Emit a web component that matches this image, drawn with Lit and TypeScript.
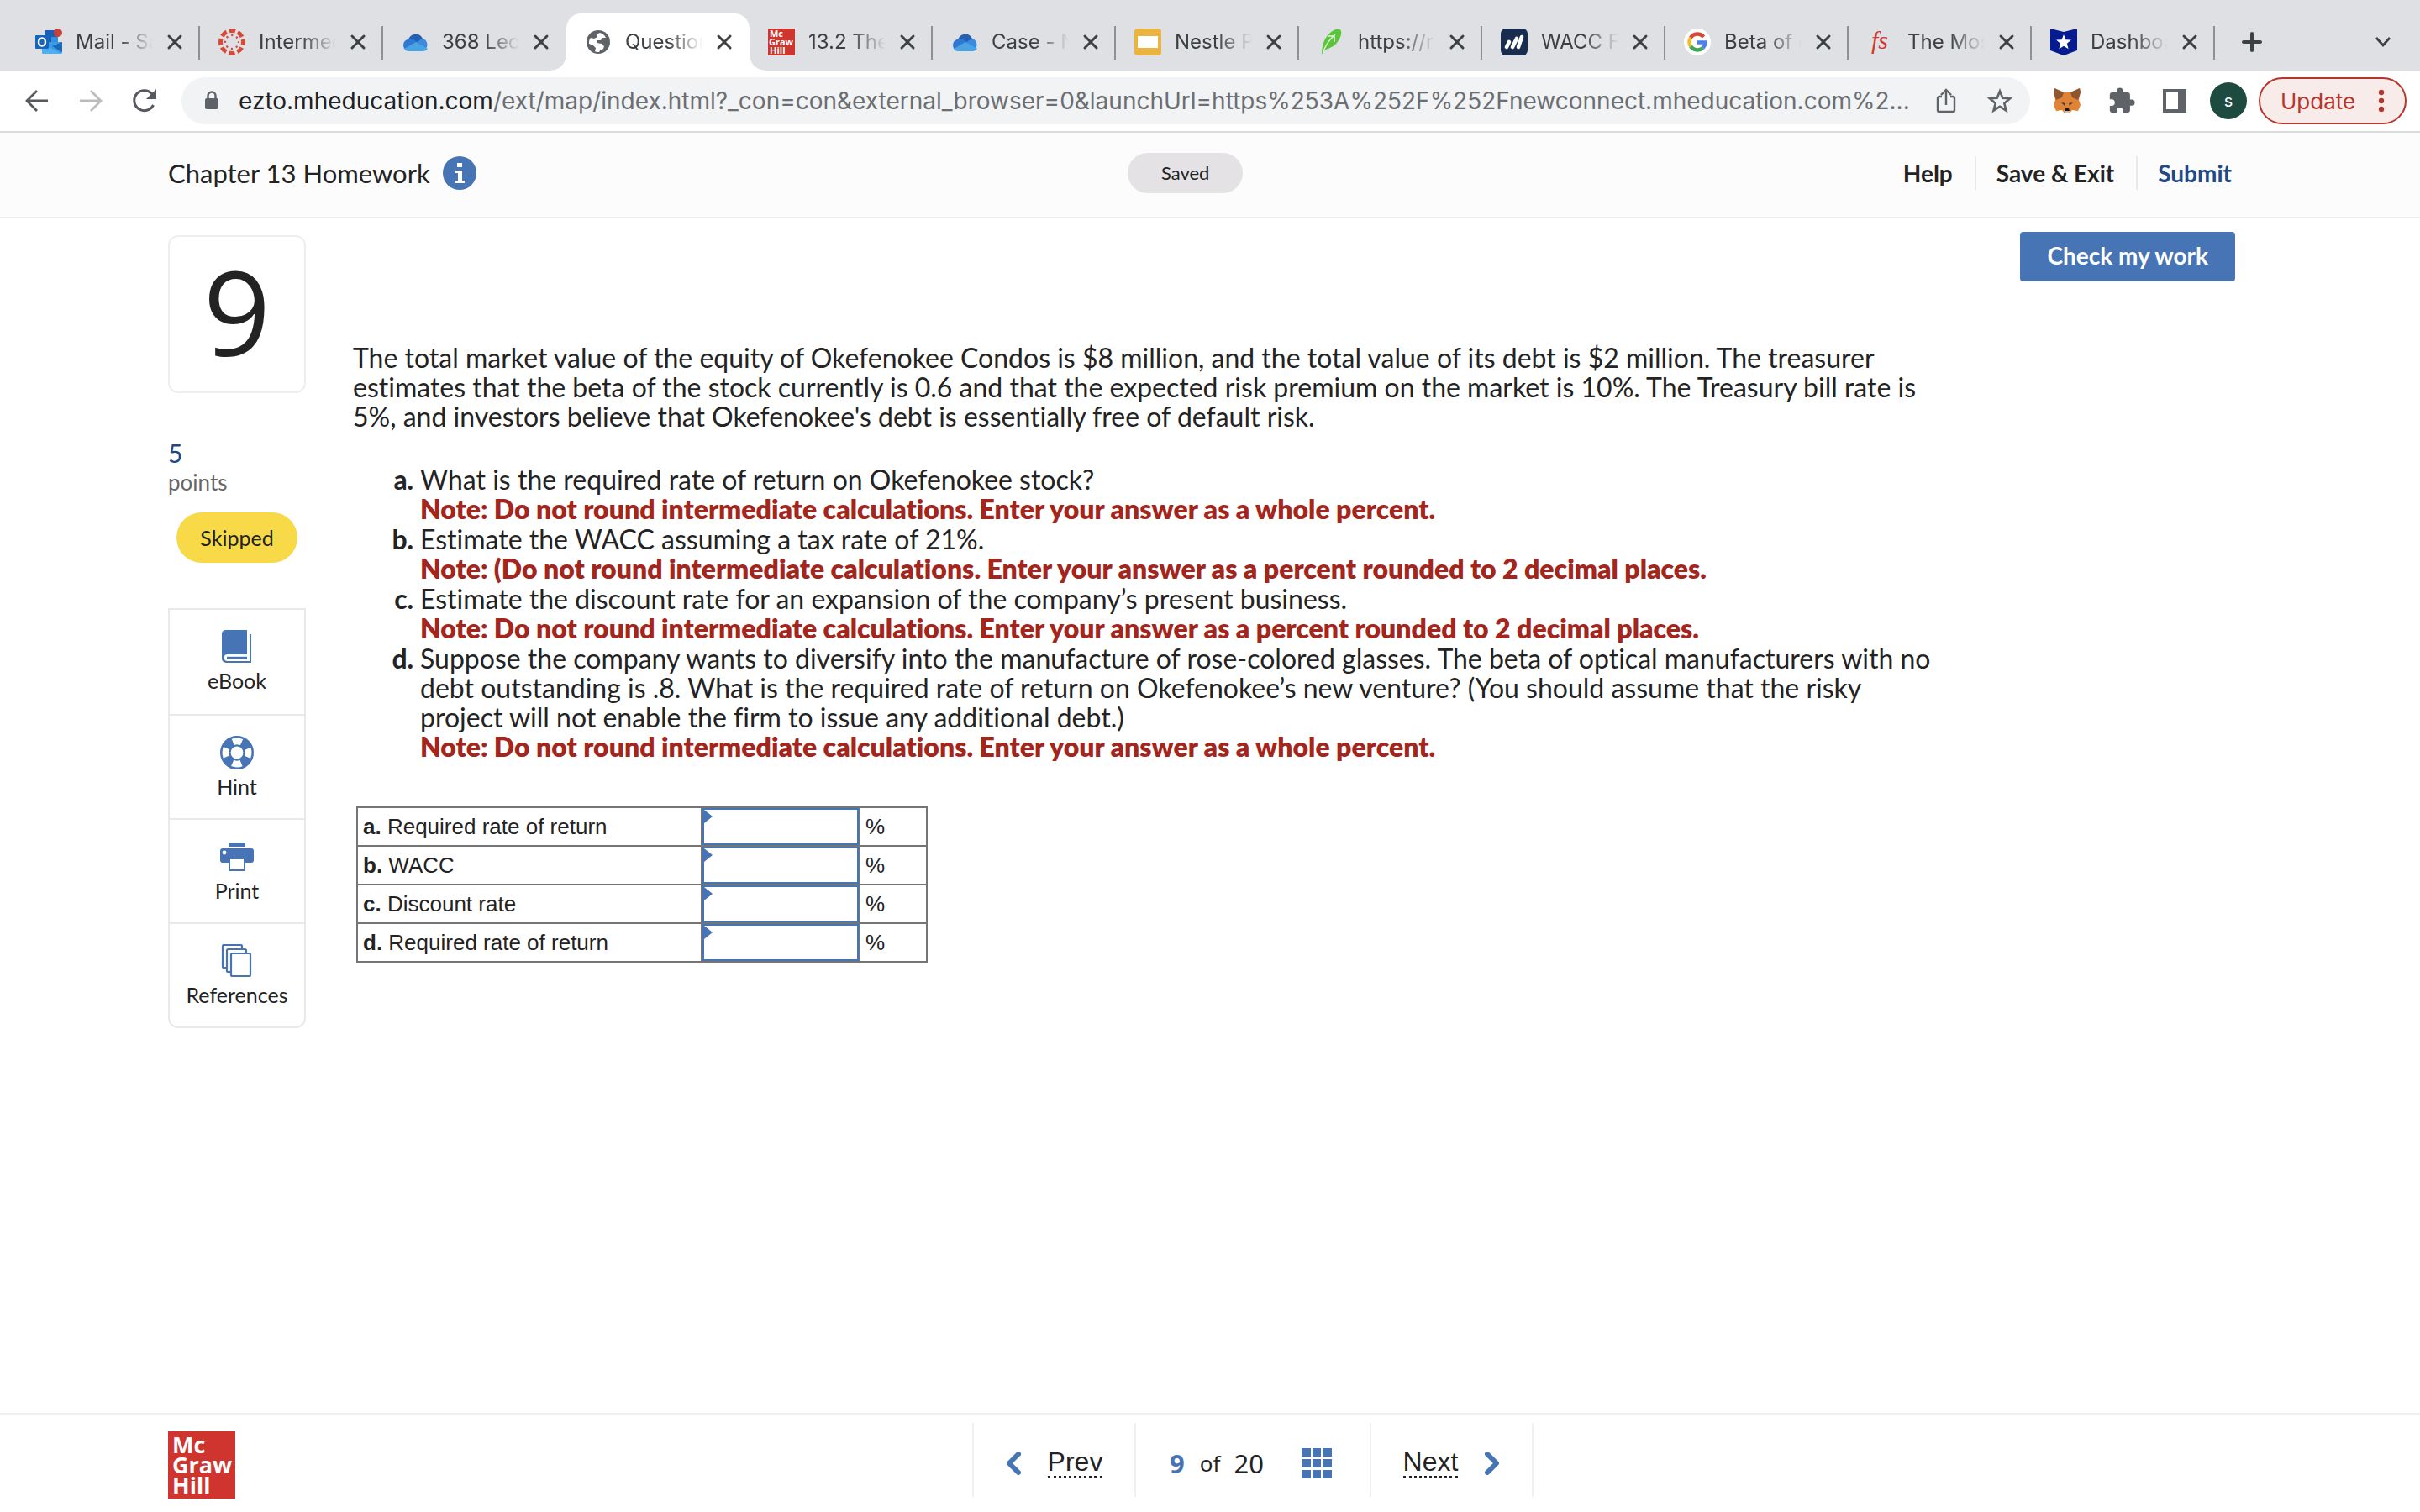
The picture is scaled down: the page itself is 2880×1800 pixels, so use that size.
import { LitElement, html, css, svg } from "lit";
import { customElement } from "lit/decorators.js";

const outlook = svg`<svg viewBox="0 0 32 32" width="32" height="32" aria-hidden="true">
  <rect x="11" y="2" width="16" height="17" fill="#1b5fb4"/><rect x="19" y="10" width="8" height="9" fill="#2f8fe0"/>
  <path d="M9 16h23v12a2 2 0 0 1-2 2H10a2 2 0 0 1-2-2z" fill="#3a9be6"/><path d="M8 18l24 12H10a2 2 0 0 1-2-2z" fill="#4fb0f0"/>
  <path d="M32 16v12l-12-7z" fill="#1868b8"/><rect x="0" y="8" width="16" height="16" rx="1" fill="#1464c0"/>
  <ellipse cx="8" cy="16" rx="4" ry="4.6" fill="none" stroke="#fff" stroke-width="2.4"/><circle cx="27" cy="5" r="5" fill="#c9403a"/></svg>`;
const canvas = svg`<svg viewBox="0 0 32 32" width="32" height="32" aria-hidden="true">
  <circle cx="16" cy="16" r="13.500" fill="none" stroke="#d8493a" stroke-width="5" stroke-dasharray="7.400 3.203" stroke-dashoffset="3.700"/>
  <circle cx="16" cy="16" r="8" fill="none" stroke="#d8493a" stroke-width="2.200" stroke-dasharray="2.200 4.083" stroke-dashoffset="1.100"/></svg>`;
const cloud = svg`<svg viewBox="0 0 32 32" width="32" height="32" aria-hidden="true">
  <path d="M8 14a9 9 0 0 1 17-2l-9 8z" fill="#2560b4"/><path d="M6 26a7 7 0 0 1 1-13c4-2 8 0 11 3l-10 10z" fill="#2f78d2"/>
  <path d="M17 17l7-5a7 7 0 0 1 3 13z" fill="#3b8ade"/><path d="M3 24l14-8 14 8a6 6 0 0 1-5 3H7a6 6 0 0 1-4-3z" fill="#4ba3e4"/></svg>`;
const globe = svg`<svg viewBox="0 0 32 32" width="32" height="32" aria-hidden="true">
  <circle cx="16" cy="16" r="14" fill="#5f6368"/><path d="M18 5c3 1 6 3 7 6l-4 0-2 3-4 0-1 3 6 1 3 3-1 3-4 2-1 2c-2 0-4 0-5-1l1-4-3-3-5-2c0-3 0-5 2-7l4 1 4-2-1-3z" fill="#fff"/></svg>`;
const mcgraw = svg`<svg viewBox="0 0 32 32" width="32" height="32" aria-hidden="true"><rect width="32" height="32" fill="#d0342f"/>
  <g fill="#fff" font-family="Open Sans, sans-serif" font-weight="700" font-size="11"><text x="2" y="10">Mc</text><text x="1" y="20">Graw</text><text x="2" y="30">Hill</text></g></svg>`;
const slides = svg`<svg viewBox="0 0 32 32" width="32" height="32" aria-hidden="true"><rect width="32" height="32" rx="4" fill="#e9b540"/><rect x="4" y="9" width="24" height="14" fill="#fff"/></svg>`;
const feather = svg`<svg viewBox="0 0 32 32" width="32" height="32" aria-hidden="true"><path d="M5 31C5 22 7 13 14 6c4-4 8-6 13-5 3 4 0 11-4 16-3 4-8 6-13 8-2 1-3 3-4 6z" fill="#5ac53a"/><path d="M6 31C8 22 13 14 21 7M13 9h7v7" fill="none" stroke="#e4f6df" stroke-width="1.400"/></svg>`;
const stripes = svg`<svg viewBox="0 0 32 32" width="32" height="32" aria-hidden="true"><rect width="32" height="32" rx="6" fill="#182c50"/><path d="M7 22l3-6M14 22l5-10M21 22l4-12" stroke="#fff" stroke-width="4.600" stroke-linecap="round"/></svg>`;
const google = svg`<svg viewBox="0 0 32 32" width="32" height="32" aria-hidden="true"><circle cx="16" cy="16" r="16" fill="#fff"/><g fill="none" stroke-width="4.400">
  <path d="M23.500 10A9.600 9.600 0 0 0 8 11" stroke="#d9483b"/><path d="M8 11a9.600 9.600 0 0 0 0 10" stroke="#f1bb2e"/><path d="M8 21a9.600 9.600 0 0 0 14.500 2" stroke="#3fa653"/><path d="M16 16.500h9.500a9 9 0 0 1-3 6.500" stroke="#4a83ec"/></g></svg>`;
const fs = svg`<svg viewBox="0 0 32 32" width="32" height="32" aria-hidden="true"><text x="5" y="24" font-family="Liberation Serif, serif" font-style="italic" font-size="30" fill="#cf3a35">fs</text></svg>`;
const shield = svg`<svg viewBox="0 0 32 32" width="32" height="32" aria-hidden="true"><path d="M0 0l16 4 16-4v26l-16 6-16-6z" fill="#041c90"/><path d="M16 7l2.400 6.200 6.600.4-5.100 4.200 1.700 6.500-5.600-3.600-5.600 3.600 1.700-6.500L7 13.600l6.600-.4z" fill="#fff"/></svg>`;
const cross = svg`<svg viewBox="0 0 20 20" width="20" height="20" aria-hidden="true"><path d="M3 3l14 14M17 3L3 17" stroke="#3c4043" stroke-width="3" stroke-linecap="round"/></svg>`;

const tabs = [
  { title: "Mail - Sa", icon: outlook },
  { title: "Intermed", icon: canvas },
  { title: "368 Lect", icon: cloud },
  { title: "Question", icon: globe, active: true },
  { title: "13.2 The", icon: mcgraw },
  { title: "Case - N", icon: cloud },
  { title: "Nestle P", icon: slides },
  { title: "https://r", icon: feather },
  { title: "WACC F", icon: stripes },
  { title: "Beta of c", icon: google },
  { title: "The Mos", icon: fs },
  { title: "Dashboa", icon: shield },
];

@customElement("browser-bar")
class BrowserBar extends LitElement {
  static styles = css`
    :host { display: block; font-family: Inter, sans-serif; }
    * { box-sizing: border-box; }
    button { border: 0; padding: 0; background: none; font: inherit; color: inherit; display: grid; place-items: center; flex: none; }
    svg { display: block; flex: none; }
    .strip { display: flex; align-items: flex-end; height: 84px; background: #dfe0e4; padding: 16px 28px 0 20px; }
    .tab { flex: 0 1 218px; min-width: 0; height: 68px; display: flex; align-items: center; padding: 0 20px 0 22px; gap: 16px; color: #3c4043; font-size: 24px; position: relative; }
    .tab::after { content: ""; position: absolute; right: 0; top: 15px; width: 2px; height: 40px; background: #8d9094; }
    .tab.active { background: #fff; border-radius: 18px 18px 0 0; }
    .tab.active::before, .tab.active::after { content: ""; position: absolute; top: auto; bottom: 0; width: 18px; height: 18px; }
    .tab.active::before { left: -18px; background: radial-gradient(circle at 0 0, #dfe0e4 17px, #fff 18px); }
    .tab.active::after { right: -18px; background: radial-gradient(circle at 100% 0, #dfe0e4 17px, #fff 18px); }
    .tab.before-active::after { display: none; }
    .name { flex: 1; min-width: 0; overflow: hidden; white-space: nowrap; line-height: 32px; mask-image: linear-gradient(90deg, #000 55%, transparent 100%); }
    .new { width: 40px; height: 68px; margin-left: 24px; }
    .more { width: 32px; height: 68px; margin-left: auto; }
    .bar { display: flex; align-items: center; height: 74px; padding: 0 16px 0 24px; background: #fff; border-bottom: 2px solid #dadbdd; }
    .nav { width: 40px; height: 56px; margin-right: 24px; }
    .address { flex: 1; min-width: 0; height: 56px; border-radius: 28px; background: #f1f3f4; display: flex; align-items: center; padding: 0 20px 0 24px; }
    .lock { width: 24px; margin-right: 20px; }
    .url { flex: 1; min-width: 0; white-space: nowrap; overflow: hidden; font-size: 28px; line-height: 40px; color: #6b6e72; }
    .host { color: #202124; }
    .tool { width: 32px; height: 48px; margin-left: 32px; }
    .share { margin-left: 16px; }
    .avatar { width: 44px; height: 44px; border-radius: 50%; background: #1e4b40; color: #fff; font-size: 20px; margin-left: 26px; }
    .fox { margin-left: 28px; }
    .update { display: flex; align-items: center; justify-content: space-between; width: 176px; height: 56px; border-radius: 28px; border: 2px solid #b8352b; background: #f8eceb; color: #b8352b; font-size: 26px; padding: 0 24px; margin-left: 14px; }
  `;

  render() {
    return html`
      <nav class="strip" aria-label="Tabs">
        ${tabs.map((t, i) => html`
          <div class="tab ${t.active ? "active" : ""} ${tabs[i + 1]?.active ? "before-active" : ""}">
            ${t.icon}<span class="name">${t.title}</span><button aria-label="Close tab">${cross}</button>
          </div>`)}
        <button class="new" aria-label="New tab"><svg viewBox="0 0 24 24" width="24" height="24"><path d="M12 2v20M2 12h20" stroke="#3c4043" stroke-width="4" stroke-linecap="round"/></svg></button>
        <button class="more" aria-label="Search tabs"><svg viewBox="0 0 20 20" width="20" height="20"><path d="M2 5l8 9 8-9" fill="none" stroke="#3c4043" stroke-width="2.800"/></svg></button>
      </nav>
      <div class="bar">
        <button class="nav" aria-label="Back"><svg viewBox="0 0 28 28" width="28" height="28"><path d="M27 14H3M14 2L2 14l12 12" fill="none" stroke="#55585d" stroke-width="2.800"/></svg></button>
        <button class="nav" aria-label="Forward"><svg viewBox="0 0 28 28" width="28" height="28"><path d="M1 14h24M14 2l12 12-12 12" fill="none" stroke="#babcbe" stroke-width="2.800"/></svg></button>
        <button class="nav" aria-label="Reload"><svg viewBox="0 0 28 28" width="28" height="28"><path d="M24.500 19A12 12 0 1 1 23 6" fill="none" stroke="#55585d" stroke-width="3"/><path d="M28 0v12H16z" fill="#55585d"/></svg></button>
        <div class="address">
          <span class="lock"><svg viewBox="0 0 24 24" width="24" height="24"><rect x="4" y="9" width="16" height="13" rx="2" fill="#5f6368"/><path d="M7.500 10V6a4.500 4.500 0 0 1 9 0v4" fill="none" stroke="#5f6368" stroke-width="2.400"/></svg></span>
          <span class="url"><span class="host">ezto.mheducation.com</span>/ext/map/index.html?_con=con&amp;external_browser=0&amp;launchUrl=https%253A%252F%252Fnewconnect.mheducation.com%2...</span>
          <button class="tool share" aria-label="Share"><svg viewBox="0 0 28 32" width="28" height="32"><path d="M9 11H6a2 2 0 0 0-2 2v14a2 2 0 0 0 2 2h16a2 2 0 0 0 2-2V13a2 2 0 0 0-2-2h-3M14 21V3M8 9l6-6 6 6" fill="none" stroke="#5f6368" stroke-width="2.400"/></svg></button>
          <button class="tool" aria-label="Bookmark"><svg viewBox="0 0 32 32" width="32" height="32"><path d="M16 4.500l3.300 8.200 8.700.6-6.700 5.700 2.200 8.600-7.500-4.700-7.500 4.700 2.200-8.600L4 13.300l8.700-.6z" fill="none" stroke="#5f6368" stroke-width="2.600"/></svg></button>
        </div>
        <button class="tool fox" aria-label="Wallet"><svg viewBox="0 0 32 32" width="32" height="32">
          <path d="M1 1l11 5h8l11-5 1 5-2 9 2 6-3 7-7-1-3 4h-6l-3-4-7 1-3-7 2-6-2-9z" fill="#e08334"/><path d="M1 1l11 5-2 6-7 3-1-3-2-6zM31 1L20 6l2 6 7 3 1-3 2-6z" fill="#8d5530"/>
          <path d="M9 18l5 1-1 3zM23 18l-5 1 1 3z" fill="#3a3f4a"/><path d="M12 27h8l-2 4h-4z" fill="#c9bfb8"/><path d="M14 25h4l1 3h-6z" fill="#16181b"/></svg></button>
        <button class="tool" aria-label="Extensions"><svg viewBox="0 0 24 24" width="34" height="34"><path d="M20.500 11H19V7c0-1.100-.9-2-2-2h-4V3.500a2.500 2.500 0 0 0-5 0V5H4c-1.100 0-2 .9-2 2v3.800h1.500a2.700 2.700 0 0 1 0 5.400H2V20c0 1.100.9 2 2 2h3.800v-1.500a2.700 2.700 0 0 1 5.400 0V22H17c1.100 0 2-.9 2-2v-4h1.500a2.500 2.500 0 0 0 0-5z" fill="#5f6368"/></svg></button>
        <button class="tool" aria-label="Side panel"><svg viewBox="0 0 28 28" width="28" height="28"><path d="M0 0h28v28H0zM4 4v20h14V4z" fill="#5f6368" fill-rule="evenodd"/></svg></button>
        <button class="avatar" aria-label="Profile">s</button>
        <button class="update">Update <svg viewBox="0 0 8 28" width="8" height="28" aria-hidden="true"><g fill="#b8352b"><circle cx="4" cy="4" r="3.200"/><circle cx="4" cy="14" r="3.200"/><circle cx="4" cy="24" r="3.200"/></g></svg></button>
      </div>`;
  }
}

const noteWhole = "Note: Do not round intermediate calculations. Enter your answer as a whole percent.";
const questions = [
  { text: "What is the required rate of return on Okefenokee stock?", note: noteWhole },
  { text: "Estimate the WACC assuming a tax rate of 21%.", note: "Note: (Do not round intermediate calculations. Enter your answer as a percent rounded to 2 decimal places." },
  { text: "Estimate the discount rate for an expansion of the company’s present business.", note: "Note: Do not round intermediate calculations. Enter your answer as a percent rounded to 2 decimal places." },
  { text: "Suppose the company wants to diversify into the manufacture of rose-colored glasses. The beta of optical manufacturers with no debt outstanding is .8. What is the required rate of return on Okefenokee’s new venture? (You should assume that the risky project will not enable the firm to issue any additional debt.)", note: noteWhole },
];
const answers = [
  ["a.", "Required rate of return"],
  ["b.", "WACC"],
  ["c.", "Discount rate"],
  ["d.", "Required rate of return"],
];
const tools = [
  { label: "eBook", icon: svg`<svg viewBox="0 0 40 40" width="40" height="40" aria-hidden="true"><path d="M6 0h26v29H8a4 4 0 0 0-3 2 4 4 0 0 0 3 6h27V5h2v34H7a5 5 0 0 1-5-5V5a5 5 0 0 1 4-5z" fill="#4674b4"/><path d="M8 33h24" stroke="#4674b4" stroke-width="2.400"/></svg>` },
  { label: "Hint", icon: svg`<svg viewBox="0 0 40 40" width="40" height="40" aria-hidden="true"><circle cx="20" cy="20" r="14" fill="none" stroke="#4674b4" stroke-width="12"/><circle cx="20" cy="20" r="13.500" fill="none" stroke="#fff" stroke-width="8" stroke-dasharray="10.600 10.606" stroke-dashoffset="5.300"/><circle cx="20" cy="20" r="8.500" fill="none" stroke="#4674b4" stroke-width="2"/></svg>` },
  { label: "Print", icon: svg`<svg viewBox="0 0 40 40" width="40" height="40" aria-hidden="true"><path d="M10 3h20v5H10zM3 10h34a3 3 0 0 1 3 3v11a3 3 0 0 1-3 3h-7v10H10V27H3a3 3 0 0 1-3-3V13a3 3 0 0 1 3-3z" fill="#4674b4"/><path d="M12 23h16v12H12z" fill="#fff"/><circle cx="5" cy="15" r="2.400" fill="#fff"/></svg>` },
  { label: "References", icon: svg`<svg viewBox="0 0 40 40" width="40" height="40" aria-hidden="true"><g fill="#fff" stroke="#4674b4" stroke-width="2.200"><rect x="3" y="1" width="23" height="27" rx="1.500"/><rect x="8" y="6" width="23" height="27" rx="1.500"/><rect x="13" y="11" width="23" height="27" rx="1.500"/></g></svg>` },
];

@customElement("app-root")
class AppRoot extends LitElement {
  static styles = css`
    :host { display: flex; flex-direction: column; min-height: 100vh; background: #fff; color: #232323; font-family: Lato, sans-serif; font-size: 32px; line-height: 35px; font-variant-ligatures: none; }
    * { box-sizing: border-box; }
    button { font: inherit; color: inherit; border: 0; padding: 0; background: none; }
    a { color: inherit; text-decoration: none; }
    svg { display: block; }
    .head { display: grid; grid-template-columns: 33fr auto 34fr; align-items: center; height: 102px; padding: 0 224px 4px 200px; background: #fcfcfc; border-bottom: 2px solid #eeeeee; }
    .title { display: flex; align-items: center; gap: 15px; margin: 0; font-weight: 400; font-size: 31px; }
    .saved { background: #e4e2e5; border-radius: 24px; padding: 0 40px; font-size: 22px; line-height: 48px; }
    .links { display: flex; justify-content: flex-end; font-weight: 700; font-size: 28px; line-height: 40px; }
    .links a + a { margin-left: 26px; padding-left: 24px; border-left: 2px solid #e9e9e9; }
    .links .submit { color: #234886; }
    .body { flex: 1; display: flex; padding: 20px 220px 0 200px; }
    .side { width: 164px; flex: none; }
    .number { height: 188px; border: 2px solid #eeeeee; border-radius: 12px; text-align: center; font-family: "Open Sans", sans-serif; font-size: 140px; line-height: 176px; }
    .points { margin-top: 54px; color: #234886; font-size: 30px; line-height: 35px; }
    .unit { color: #666; font-size: 26px; line-height: 35px; }
    .skipped { margin: 18px 10px 54px; background: #f8da48; border-radius: 30px; text-align: center; font-size: 25px; line-height: 60px; }
    .tools { border: 2px solid #e9e9e9; border-radius: 0 0 12px 12px; }
    .item { display: flex; flex-direction: column; align-items: center; width: 100%; height: 124px; padding-top: 24px; gap: 4px; font-size: 25px; line-height: 32px; }
    .item + .item { border-top: 2px solid #e9e9e9; }
    .main { flex: 1; min-width: 0; margin-left: 56px; display: flex; flex-direction: column; }
    .check { align-self: flex-end; margin-top: -4px; height: 59px; padding: 0 32px 3px; border-radius: 4px; background: #4674b4; color: #fff; font-weight: 700; font-size: 28px; }
    .text { max-width: 1880px; }
    .text p { margin: 73px 0 0; }
    .list { margin: 40px 0 0; padding: 0 0 0 80px; list-style: lower-alpha; }
    .list li { margin-bottom: 1px; padding: 0; }
    .list li::marker { font-weight: 700; }
    .note { color: #a3251c; font-weight: 800; }
    .grid { border-collapse: collapse; margin: 53px 0 0 4px; align-self: flex-start; font-family: "Liberation Sans", Arial, sans-serif; font-size: 26px; line-height: 32px; }
    .grid td, .grid th { border: 2px solid #757575; height: 46px; padding: 0 6px; text-align: left; font-weight: 400; }
    .grid .label { width: 410px; }
    .grid .entry { width: 188px; padding: 0; position: relative; }
    .grid .unit-cell { width: 80px; }
    .grid input { display: block; width: 100%; height: 44px; border: 2px solid #4674b4; background: #fff; font: inherit; padding: 0 12px; }
    .flag { position: absolute; left: 2px; top: 2px; }
    .foot { display: grid; grid-template-columns: 1fr auto 1fr; border-top: 2px solid #f0f0f0; height: 118px; padding: 10px 98px 0 200px; }
    .logo { width: 80px; height: 80px; margin-top: 10px; padding: 4px 0 0 5px; background: #d0342f; color: #fff; font-family: "Open Sans", sans-serif; font-weight: 700; font-size: 27px; line-height: 24px; }
    .pager { display: flex; height: 88px; border-left: 2px solid #f0f0f0; }
    .cell { display: flex; align-items: center; border-right: 2px solid #f0f0f0; padding-top: 8px; }
    .step { width: 193px; font-family: "Liberation Sans", Arial, sans-serif; font-size: 32px; justify-content: center; gap: 32px; }
    .step span { border-bottom: 3px dotted #232323; line-height: 33px; }
    .count { width: 280px; padding-left: 40px; font-family: "Noto Sans", sans-serif; font-size: 31px; }
    .count b { color: #4674b4; }
    .of { font-size: 26px; margin: 0 16px 0 18px; }
    .count button { margin-left: 45px; }
  `;

  render() {
    return html`
      <browser-bar></browser-bar>
      <header class="head">
        <h1 class="title">Chapter 13 Homework
          <svg viewBox="0 0 40 40" width="40" height="40" aria-hidden="true"><circle cx="20" cy="20" r="20" fill="#4674b4"/><path d="M17 8h6v5h-6zM15 17h8v12h3v3H14.500v-3H18v-9h-3z" fill="#fff"/></svg>
        </h1>
        <span class="saved">Saved</span>
        <nav class="links"><a href="#help">Help</a><a href="#save">Save &amp; Exit</a><a class="submit" href="#submit">Submit</a></nav>
      </header>
      <div class="body">
        <aside class="side">
          <div class="number">9</div>
          <div class="points">5</div>
          <div class="unit">points</div>
          <div class="skipped">Skipped</div>
          <div class="tools">${tools.map((t) => html`<button class="item">${t.icon}<span>${t.label}</span></button>`)}</div>
        </aside>
        <main class="main">
          <button class="check">Check my work</button>
          <div class="text">
            <p>The total market value of the equity of Okefenokee Condos is $8 million, and the total value of its debt is $2 million. The treasurer estimates that the beta of the stock currently is 0.6 and that the expected risk premium on the market is 10%. The Treasury bill rate is 5%, and investors believe that Okefenokee's debt is essentially free of default risk.</p>
            <ol class="list">${questions.map((q) => html`<li>${q.text}<div class="note">${q.note}</div></li>`)}</ol>
          </div>
          <table class="grid">
            ${answers.map(([k, label], i) => html`<tr>
              <th class="label" scope="row"><label for="answer-${i}"><b>${k}</b> ${label}</label></th>
              <td class="entry"><input id="answer-${i}" type="text" /><svg class="flag" viewBox="0 0 10 16" width="10" height="16" aria-hidden="true"><path d="M0 0l10 8-10 8z" fill="#4674b4"/></svg></td>
              <td class="unit-cell">%</td>
            </tr>`)}
          </table>
        </main>
      </div>
      <footer class="foot">
        <div class="logo">Mc<br />Graw<br />Hill</div>
        <nav class="pager" aria-label="Questions">
          <a class="cell step" href="#prev"><svg viewBox="0 0 18 28" width="18" height="28" aria-hidden="true"><path d="M15 3L4 14l11 11" fill="none" stroke="#4674b4" stroke-width="6" stroke-linecap="round" stroke-linejoin="round"/></svg><span>Prev</span></a>
          <div class="cell count"><b>9</b><span class="of">of</span>20
            <button aria-label="All questions"><svg viewBox="0 0 36 36" width="36" height="36"><path d="M0 0h11v10H0zM13 0h10v10H13zM25 0h11v10H25zM0 13h11v10H0zM13 13h10v10H13zM25 13h11v10H25zM0 26h11v10H0zM13 26h10v10H13zM25 26h11v10H25z" fill="#4674b4"/></svg></button></div>
          <a class="cell step" href="#next"><span>Next</span><svg viewBox="0 0 18 28" width="18" height="28" aria-hidden="true"><path d="M3 3l11 11L3 25" fill="none" stroke="#4674b4" stroke-width="6" stroke-linecap="round" stroke-linejoin="round"/></svg></a>
        </nav>
      </footer>`;
  }
}
